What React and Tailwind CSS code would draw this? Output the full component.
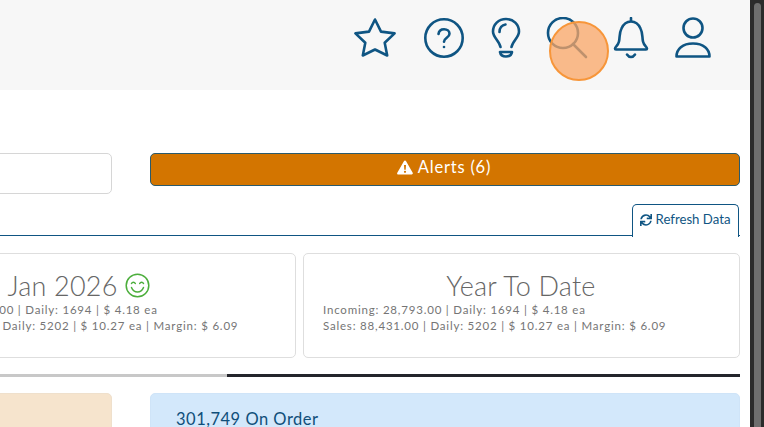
import { FaSync } from "react-icons/fa";

const blue = "#0f5583";

const Star = () => (
  <svg width="44" height="42" viewBox="0 0 44 42" fill="none" stroke={blue} strokeWidth="2.6" strokeLinejoin="round">
    <path d="M22 2.5l6 12.100 13.600 1.800-9.900 9.400 2.500 12.700L22 32.500l-12.200 6 2.500-12.700-9.900-9.400L16 14.600z" />
  </svg>
);

const Help = () => (
  <svg width="42" height="42" viewBox="0 0 42 42" fill="none" stroke={blue} strokeWidth="2.6" strokeLinecap="round">
    <circle cx="21" cy="21" r="18.700" />
    <path d="M15.500 17c.4-3 2.600-4.700 5.600-4.700 3.100 0 5.400 1.900 5.400 4.500 0 4-5.500 4-5.500 8" />
    <circle cx="21" cy="30" r="1.300" fill={blue} stroke="none" />
  </svg>
);

const Bulb = () => (
  <svg width="30" height="42" viewBox="0 0 30 42" fill="none" stroke={blue} strokeWidth="2.600" strokeLinecap="round" strokeLinejoin="round">
    <path d="M9.500 30C8.500 24 2 20.500 2 14.500 2 7.500 7.500 2 15 2s13 5.500 13 12.500c0 6-6.500 9.500-7.500 15.500" />
    <path d="M8.500 15c0-4 2.500-7 6-7.500" />
    <path d="M9 35h12c-.5 3-2.500 4.500-6 4.500S9.500 38 9 35z" />
  </svg>
);

const Search = () => (
  <svg width="42" height="42" viewBox="0 0 42 42" fill="none" stroke={blue} strokeWidth="2.600" strokeLinecap="round">
    <circle cx="17" cy="16" r="15" />
    <path d="M27 27l13 13" />
  </svg>
);

const Bell = () => (
  <svg width="36" height="42" viewBox="0 0 36 42" fill="none" stroke={blue} strokeWidth="2.600" strokeLinecap="round" strokeLinejoin="round">
    <path d="M18 1v3" />
    <path d="M2 31.500c0-2 3-2.500 4-7 1-4.500 0-8 2.500-13C10.500 7 14 4.500 18 4.500s7.500 2.500 9.500 7c2.500 5 1.500 8.500 2.500 13 1 4.500 4 5 4 7 0 .5-.5 1-1 1H3c-.5 0-1-.5-1-1z" />
    <path d="M14 37.500c1 1.500 2.300 2.500 4 2.500s3-1 4-2.500" />
  </svg>
);

const User = () => (
  <svg width="36" height="42" viewBox="0 0 36 42" fill="none" stroke={blue} strokeWidth="2.600" strokeLinejoin="round">
    <circle cx="18" cy="11" r="9.500" />
    <path d="M1.500 39.500c0-7.500 6-13 16.500-13s16.500 5.500 16.500 13z" />
  </svg>
);

const Smile = () => (
  <svg className="mr-[13px]" width="25" height="25" viewBox="0 0 25 25" fill="none" stroke="#4cae3c" strokeWidth="1.500" strokeLinecap="round">
    <circle cx="12.500" cy="12.500" r="11.300" />
    <path d="M6.500 10.500c.8-1.800 3-1.800 3.800 0M14.700 10.500c.8-1.800 3-1.800 3.800 0" />
    <path d="M6.500 14.500c1.200 3 3.400 4.500 6 4.500s4.800-1.500 6-4.500" />
  </svg>
);

function StatCard({ title, icon, className }) {
  return (
    <div className={`h-[105px] rounded-[5px] border border-[#dedede] bg-white pl-[19px] pr-5 pt-[14px] text-[#757575] ${className}`}>
      <h2 className="flex h-[34px] items-center justify-center gap-[7px] text-[27px] font-light leading-none tracking-[0.200px] text-[#666666]">
        {title}
        {icon}
      </h2>
      <div className="text-[11.500px] leading-[16px] tracking-[0.800px]">
        <p>Incoming: 28,793.00 | Daily: 1694 | $ 4.18 ea</p>
        <p>Sales: 88,431.00 | Daily: 5202 | $ 10.27 ea | Margin: $ 6.09</p>
      </div>
    </div>
  );
}

export default function App() {
  return (
    <div className="relative flex h-[427px] w-[764px] overflow-hidden bg-white font-['Lato',sans-serif]">
      <main className="w-[750px] shrink-0">
        {/* TOP BAR */}
        <header className="flex h-[90px] items-center justify-end bg-[#f7f7f7] pb-[14px] pr-[39px]">
          <Star />
          <div className="ml-[26px]"><Help /></div>
          <div className="ml-[26px]"><Bulb /></div>
          <div className="ml-[25px]"><Search /></div>
          <div className="ml-[25px]"><Bell /></div>
          <div className="ml-[26px]"><User /></div>
        </header>

        <div className="pr-[10px]">
          {/* INPUT + ALERTS */}
          <div className="mt-[63px] flex items-start gap-[38px]">
            <div className="ml-[-20px] h-[41px] w-[132px] rounded-[5px] border border-[#d6d6d6] bg-white" />
            <button className="flex h-[33px] flex-1 items-center justify-center gap-[5px] rounded-[5px] border border-[#2a5a6c] bg-[#d37500] pb-[4px] pr-[2px] text-[16.500px] tracking-[0.800px] text-white">
              <svg width="16" height="15" viewBox="0 0 16 15" fill="white">
                <path fillRule="evenodd" d="M8 .5c.5 0 .9.300 1.100.700l6.600 11.600c.4.800-.1 1.700-1 1.700H1.300c-.9 0-1.500-.9-1-1.700L6.900 1.200C7.100.8 7.500.5 8 .5zM7 5l.3 4.800h1.400L9 5zm1 5.700a1.100 1.100 0 100 2.200 1.100 1.100 0 000-2.200z" />
              </svg>
              Alerts (6)
            </button>
          </div>

          {/* TAB LINE */}
          <div className="mt-[10px] flex h-[32px] justify-end border-b border-[#0f5583]">
            <button className="mr-[1px] flex h-[33px] w-[107px] items-center justify-center gap-[4px] rounded-t-[5px] border border-b-0 border-[#0f5583] bg-white pb-[2px] pr-[1px] text-[13.200px] text-[#0f5583]">
              <FaSync size={12} />
              Refresh Data
            </button>
          </div>

          {/* STAT CARDS */}
          <div className="mt-[17px] flex gap-[7px]">
            <StatCard title="Jan 2026" icon={<Smile />} className="ml-[-125px] w-[421px] shrink-0" />
            <StatCard title="Year To Date" className="flex-1" />
          </div>

          {/* PROGRESS */}
          <div className="mt-[16px] flex h-[3px]">
            <div className="w-[227px] bg-[#c8c8c8]" />
            <div className="flex-1 bg-[#23252b]" />
          </div>

          {/* BOTTOM CARDS */}
          <div className="mt-[16px] flex gap-[38px]">
            <div className="ml-[-20px] h-[60px] w-[132px] rounded-[5px] border border-[#efe0cc] bg-[#f6e4cd]" />
            <div className="h-[60px] flex-1 rounded-[5px] border border-[#cfe4f8] bg-[#d3e8fb] pl-[25px] pt-[15px] text-[16.500px] leading-5 tracking-[0.500px] text-[#0f4f7a]">
              301,749 On Order
            </div>
          </div>
        </div>
      </main>

      {/* SCROLLBAR */}
      <aside className="flex-1 bg-[#2b2b2b] pl-[4px] pr-[3px]">
        <div className="mt-[3px] h-[424px] rounded-t-full bg-[#6e6e6e]" />
      </aside>

      {/* CLICK HIGHLIGHT */}
      <div className="absolute left-[549px] top-[21px] h-[60px] w-[60px] rounded-full border-2 border-[#f7963a] bg-[#f9a666]/75" />
    </div>
  );
}
